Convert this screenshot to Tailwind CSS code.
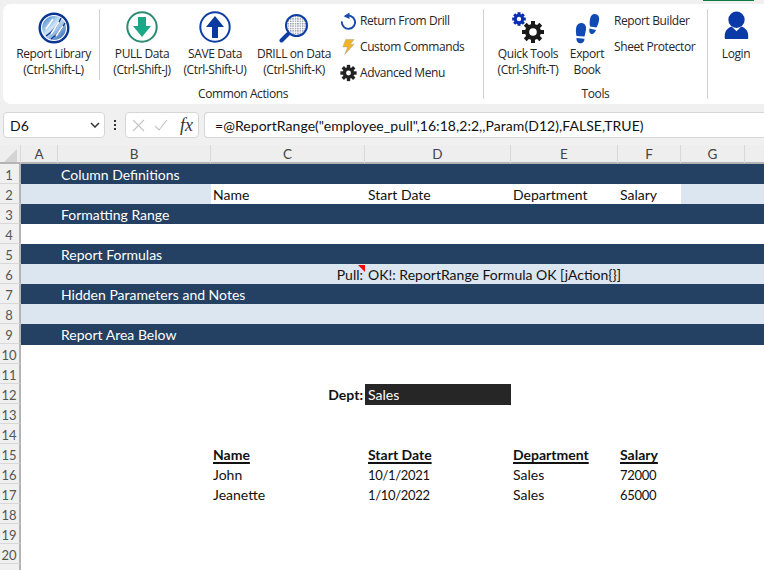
<!DOCTYPE html>
<html lang="en">
<head>
  <meta charset="UTF-8" />
  <meta name="viewport" content="width=device-width, initial-scale=1.0" />
  <title>Report Sheet</title>
  <script src="https://cdn.jsdelivr.net/npm/@tailwindcss/browser@4"></script>
</head>
<body class="bg-[#f0f0f0] w-[764px] h-[570px] overflow-hidden font-['Lato',sans-serif] text-[14px] text-[#111]">

  <!-- Tab underline -->
  <div class="h-[4px] flex justify-end pr-[10px]"><div class="w-[51px] h-[1px] bg-[#107c41]"></div></div>

  <!-- Ribbon -->
  <div class="ml-[3px] h-[100px] bg-white rounded-l-[8px] flex font-['Open_Sans',sans-serif] text-[12px] tracking-[-0.4px] leading-[16px] text-[#262626]">
    <!-- Common Actions -->
    <div class="w-[481px] flex flex-col border-r border-[#d0d0d0] my-[5px]">
      <div class="flex h-[77px] shrink-0">
        <div class="w-[97px] pl-[5px] flex flex-col items-center pt-[3px] mb-[6px] border-r border-[#d0d0d0]">
          <svg class="w-[32px] h-[32px]" viewBox="0 0 32 32">
            <defs><linearGradient id="g" x1="0" y1="0" x2="1" y2="1"><stop offset="0" stop-color="#1f6fc4"/><stop offset="0.45" stop-color="#cfe6f8"/><stop offset="1" stop-color="#0b4fa8"/></linearGradient></defs>
            <circle cx="16" cy="16" r="15.5" fill="#0a3590"/>
            <circle cx="16" cy="16" r="12.5" fill="url(#g)" stroke="#fff" stroke-width="1.2"/>
            <path d="M8 24C14 20 20 14 23 6M13 27C19 23 24 17 27 11" fill="none" stroke="#0a3590" stroke-width="1.3"/>
            <path d="M8 17L15 7M13 22L21 10M18 24L25 14" fill="none" stroke="#fff" stroke-width="1.4"/>
          </svg>
          <div class="mt-[2px] text-center whitespace-nowrap">Report Library<br>(Ctrl-Shift-L)</div>
        </div>
        <div class="w-[80px] ml-[2px] flex flex-col items-center pt-[2px]">
          <svg class="w-[32px] h-[32px]" viewBox="0 0 32 32">
            <circle cx="16" cy="16" r="14.7" fill="#fff" stroke="#2b8a72" stroke-width="2"/>
            <path d="M12 6h8v9h5L16 26 7 15h5z" fill="#1aa886"/>
          </svg>
          <div class="mt-[3px] text-center whitespace-nowrap">PULL Data<br>(Ctrl-Shift-J)</div>
        </div>
        <div class="w-[66px] flex flex-col items-center pt-[2px]">
          <svg class="w-[32px] h-[32px]" viewBox="0 0 32 32">
            <circle cx="16" cy="16" r="14.7" fill="#fff" stroke="#0e3ea3" stroke-width="2"/>
            <path d="M13 27V16H7L16 5l9 11h-6v11z" fill="#0a3aa0"/>
          </svg>
          <div class="mt-[3px] text-center whitespace-nowrap">SAVE Data<br>(Ctrl-Shift-U)</div>
        </div>
        <div class="w-[92px] flex flex-col items-center pt-[2px]">
          <svg class="w-[32px] h-[32px]" viewBox="0 0 32 32">
            <defs><pattern id="mesh" width="2.4" height="2.4" patternUnits="userSpaceOnUse"><rect width="2.4" height="2.4" fill="#fff"/><rect width="1.4" height="1.4" fill="#8d96a8"/></pattern></defs>
            <path d="M3.5 29.5L10 23" stroke="#0e3ea3" stroke-width="4" stroke-linecap="round"/>
            <circle cx="18.5" cy="14.5" r="10.5" fill="url(#mesh)" stroke="#0e3ea3" stroke-width="2"/>
          </svg>
          <div class="mt-[3px] text-center whitespace-nowrap">DRILL on Data<br>(Ctrl-Shift-K)</div>
        </div>
        <!-- Small commands -->
        <div class="flex flex-col gap-[10px] pt-[4px]">
          <div class="flex items-center gap-[3px] whitespace-nowrap h-[16px]">
            <svg class="w-[17px] h-[18px]" viewBox="0 0 18 18"><path d="M5.5 4.2A7 7 0 1 1 2 9.5" fill="none" stroke="#1a4ba8" stroke-width="2"/><path d="M10 0L10 7 4 4z" fill="#1a4ba8"/></svg>
            <span>Return From Drill</span>
          </div>
          <div class="flex items-center gap-[3px] whitespace-nowrap h-[16px]">
            <svg class="w-[17px] h-[18px]" viewBox="0 0 18 18"><path d="M6 1h9l-4 5h4L5 17l3-8H3z" fill="#f0b429" stroke="#a8a39a" stroke-width="0.5"/></svg>
            <span>Custom Commands</span>
          </div>
          <div class="flex items-center gap-[3px] whitespace-nowrap h-[16px]">
            <svg class="w-[17px] h-[18px]" viewBox="-9 -9 18 18" fill="#222"><g><rect x="-1.8" y="-8.6" width="3.6" height="17.2"/><rect x="-1.8" y="-8.6" width="3.6" height="17.2" transform="rotate(45)"/><rect x="-1.8" y="-8.6" width="3.6" height="17.2" transform="rotate(90)"/><rect x="-1.8" y="-8.6" width="3.6" height="17.2" transform="rotate(135)"/></g><circle r="4.6" fill="none" stroke="#222" stroke-width="3"/><circle r="2.6" fill="#fff"/></svg>
            <span>Advanced Menu</span>
          </div>
        </div>
      </div>
      <div class="h-[12px] text-center">Common Actions</div>
    </div>

    <!-- Tools -->
    <div class="w-[224px] flex flex-col border-r border-[#d0d0d0] my-[5px]">
      <div class="flex h-[77px] shrink-0">
        <div class="w-[88px] flex flex-col items-center pt-[3px]">
          <svg class="w-[32px] h-[32px]" viewBox="0 0 32 32">
            <g transform="translate(7 7)" fill="#0a2fb0"><rect x="-1.5" y="-6.8" width="3" height="13.6"/><rect x="-1.5" y="-6.8" width="3" height="13.6" transform="rotate(45)"/><rect x="-1.5" y="-6.8" width="3" height="13.6" transform="rotate(90)"/><rect x="-1.5" y="-6.8" width="3" height="13.6" transform="rotate(135)"/><circle r="4" fill="none" stroke="#0a2fb0" stroke-width="2.4"/><circle r="2.2" fill="#fff"/></g>
            <g transform="translate(21 20)" fill="#1a1a1a"><rect x="-2" y="-11" width="4" height="22"/><rect x="-2" y="-11" width="4" height="22" transform="rotate(45)"/><rect x="-2" y="-11" width="4" height="22" transform="rotate(90)"/><rect x="-2" y="-11" width="4" height="22" transform="rotate(135)"/><circle r="6" fill="none" stroke="#1a1a1a" stroke-width="4"/><circle r="3.8" fill="#fff"/></g>
          </svg>
          <div class="mt-[2px] text-center whitespace-nowrap">Quick Tools<br>(Ctrl-Shift-T)</div>
        </div>
        <div class="w-[30px] flex flex-col items-center pt-[3px]">
          <svg class="w-[32px] h-[32px] shrink-0" viewBox="0 0 32 32" fill="#0f4ab5">
            <path d="M10 11c3.500 0 5.500 2.500 5 6.500-.4 2.500-1 5-1.500 7L5.500 24C4.500 20 4 11 10 11z"/>
            <path d="M5.500 26l8 .8c0 2.800-1.600 4.500-4 4.500s-4.400-2-4-5.300z"/>
            <path d="M23.500 2c4 0 5 3 4.500 6.500-.4 2.600-1.500 5-2.500 7L19 14.500C18 9 19 2 23.500 2z"/>
            <path d="M18.500 16.500l6.500 1.500c-.8 2.500-2.500 4.200-4.600 3.900-2-.3-2.500-3-1.900-5.400z"/>
          </svg>
          <div class="mt-[2px] text-center">Export<br>Book</div>
        </div>
        <div class="flex flex-col gap-[10px] ml-[12px] pt-[4px] whitespace-nowrap">
          <div class="h-[16px]">Report Builder</div>
          <div class="h-[16px]">Sheet Protector</div>
        </div>
      </div>
      <div class="h-[12px] text-center">Tools</div>
    </div>

    <!-- Login -->
    <div class="w-[56px] flex flex-col items-center pt-[7px]">
      <svg class="w-[25px] h-[29px]" viewBox="0 0 26 30" fill="#0a3aa8">
        <circle cx="13" cy="9" r="8.5"/>
        <path d="M1 29c-1-6 1-11 7-13l5 5 5-5c6 2 8 7 7 13z"/>
      </svg>
      <div class="mt-[6px]">Login</div>
    </div>
  </div>

  <!-- Formula bar -->
  <div class="flex items-center h-[26px] mt-[8px] ml-[3px]">
    <div class="w-[102px] h-[26px] bg-white border border-[#d6d6d6] rounded-[4px] flex items-center justify-between pl-[6px] pr-[4px] text-[14px]">
      <span>D6</span>
      <svg class="w-[10px] h-[6px]" viewBox="0 0 10 6"><path d="M1 1l4 4 4-4" fill="none" stroke="#333" stroke-width="1.5"/></svg>
    </div>
    <div class="w-[20px] flex flex-col items-center gap-[2px]">
      <span class="w-[2px] h-[2px] bg-[#333]"></span><span class="w-[2px] h-[2px] bg-[#333]"></span><span class="w-[2px] h-[2px] bg-[#333]"></span>
    </div>
    <div class="w-[74px] h-[26px] bg-white border border-[#d6d6d6] rounded-[4px] flex items-center pl-[6px] gap-[9px]">
      <svg class="w-[13px] h-[13px]" viewBox="0 0 13 13"><path d="M1 1l11 11M12 1L1 12" stroke="#c4c4c4" stroke-width="1.1"/></svg>
      <svg class="w-[14px] h-[12px]" viewBox="0 0 14 12"><path d="M1 7l4 4 8-10" fill="none" stroke="#c4c4c4" stroke-width="1.1"/></svg>
      <span class="ml-[3px] font-['Liberation_Serif',serif] italic text-[18px] text-[#333] leading-none">fx</span>
    </div>
    <div class="ml-[5px] flex-1 h-[26px] bg-white border-y border-l border-[#d6d6d6] rounded-l-[4px] pl-[10px] leading-[25px] tracking-[0.05px] whitespace-nowrap">=@ReportRange("employee_pull",16:18,2:2,,Param(D12),FALSE,TRUE)</div>
  </div>

  <!-- Column headers -->
  <div class="grid grid-cols-[21px_37px_153px_154px_146px_107px_63px_64px_19px] h-[19px] mt-[7px] bg-[#eeeeee] border-b-2 border-[#b4b4b4] text-[#444] text-[13.5px] leading-[18px] text-center">
    <div class="border-r border-[#d8d8d8] flex items-end justify-end pr-[3px] pb-[1px]"><svg class="w-[13px] h-[13px]" viewBox="0 0 13 13"><path d="M13 0v13H0z" fill="#d4d4d4"/></svg></div>
    <div class="border-r border-[#d8d8d8]">A</div>
    <div class="border-r border-[#d8d8d8]">B</div>
    <div class="border-r border-[#d8d8d8]">C</div>
    <div class="border-r border-[#d8d8d8]">D</div>
    <div class="border-r border-[#d8d8d8]">E</div>
    <div class="border-r border-[#d8d8d8]">F</div>
    <div class="border-r border-[#d8d8d8]">G</div>
    <div></div>
  </div>

  <!-- Sheet rows -->
  <div class="grid grid-cols-[21px_37px_153px_154px_146px_107px_63px_64px_19px] auto-rows-[20px] leading-[21px] bg-white">
    <!-- 1 -->
    <div class="bg-[#f0f0f0] border-r-2 border-b border-r-[#b4b4b4] border-b-[#d8d8d8] text-[#555] text-[13px] leading-[22px] pr-[1px] text-center">1</div>
    <div class="col-span-8 bg-[#244062] text-white pl-[40px]">Column Definitions</div>
    <!-- 2 -->
    <div class="bg-[#f0f0f0] border-r-2 border-b border-r-[#b4b4b4] border-b-[#d8d8d8] text-[#555] text-[13px] leading-[22px] pr-[1px] text-center">2</div>
    <div class="col-span-2 bg-[#dce6f1]"></div>
    <div class="pl-[2px]">Name</div>
    <div class="pl-[3px]">Start Date</div>
    <div class="pl-[2px]">Department</div>
    <div class="pl-[2px]">Salary</div>
    <div class="col-span-2 bg-[#dce6f1]"></div>
    <!-- 3 -->
    <div class="bg-[#f0f0f0] border-r-2 border-b border-r-[#b4b4b4] border-b-[#d8d8d8] text-[#555] text-[13px] leading-[22px] pr-[1px] text-center">3</div>
    <div class="col-span-8 bg-[#244062] text-white pl-[40px]">Formatting Range</div>
    <!-- 4 -->
    <div class="bg-[#f0f0f0] border-r-2 border-b border-r-[#b4b4b4] border-b-[#d8d8d8] text-[#555] text-[13px] leading-[22px] pr-[1px] text-center">4</div>
    <div class="col-span-8"></div>
    <!-- 5 -->
    <div class="bg-[#f0f0f0] border-r-2 border-b border-r-[#b4b4b4] border-b-[#d8d8d8] text-[#555] text-[13px] leading-[22px] pr-[1px] text-center">5</div>
    <div class="col-span-8 bg-[#244062] text-white pl-[40px]">Report Formulas</div>
    <!-- 6 -->
    <div class="bg-[#f0f0f0] border-r-2 border-b border-r-[#b4b4b4] border-b-[#d8d8d8] text-[#555] text-[13px] leading-[22px] pr-[1px] text-center">6</div>
    <div class="col-span-2 bg-[#dce6f1]"></div>
    <div class="relative bg-[#dce6f1] text-right pr-[2px]">Pull:<span class="absolute top-[1px] right-0 w-0 h-0 border-t-[7px] border-l-[7px] border-t-[#ff0000] border-l-transparent"></span></div>
    <div class="col-span-5 bg-[#dce6f1] pl-[3px]">OK!: ReportRange Formula OK [jAction{}]</div>
    <!-- 7 -->
    <div class="bg-[#f0f0f0] border-r-2 border-b border-r-[#b4b4b4] border-b-[#d8d8d8] text-[#555] text-[13px] leading-[22px] pr-[1px] text-center">7</div>
    <div class="col-span-8 bg-[#244062] text-white pl-[40px]">Hidden Parameters and Notes</div>
    <!-- 8 -->
    <div class="bg-[#f0f0f0] border-r-2 border-b border-r-[#b4b4b4] border-b-[#d8d8d8] text-[#555] text-[13px] leading-[22px] pr-[1px] text-center">8</div>
    <div class="col-span-8 bg-[#dce6f1]"></div>
    <!-- 9 -->
    <div class="bg-[#f0f0f0] border-r-2 border-b border-r-[#b4b4b4] border-b-[#d8d8d8] text-[#555] text-[13px] leading-[22px] pr-[1px] text-center">9</div>
    <div class="col-span-8 bg-[#244062] shadow-[0_1px_0_#244062] text-white pl-[40px]">Report Area Below</div>
    <!-- 10, 11 -->
    <div class="bg-[#f0f0f0] border-r-2 border-b border-r-[#b4b4b4] border-b-[#d8d8d8] text-[#555] text-[13px] leading-[22px] pr-[1px] text-center">10</div><div class="col-span-8"></div>
    <div class="bg-[#f0f0f0] border-r-2 border-b border-r-[#b4b4b4] border-b-[#d8d8d8] text-[#555] text-[13px] leading-[22px] pr-[1px] text-center">11</div><div class="col-span-8"></div>
    <!-- 12 -->
    <div class="bg-[#f0f0f0] border-r-2 border-b border-r-[#b4b4b4] border-b-[#d8d8d8] text-[#555] text-[13px] leading-[22px] pr-[1px] text-center">12</div>
    <div class="col-span-3 text-right pr-[2px] font-bold">Dept:</div>
    <div class="bg-[#262626] shadow-[0_1px_0_#262626] text-white pl-[3px]">Sales</div>
    <div class="col-span-4"></div>
    <!-- 13, 14 -->
    <div class="bg-[#f0f0f0] border-r-2 border-b border-r-[#b4b4b4] border-b-[#d8d8d8] text-[#555] text-[13px] leading-[22px] pr-[1px] text-center">13</div><div class="col-span-8"></div>
    <div class="bg-[#f0f0f0] border-r-2 border-b border-r-[#b4b4b4] border-b-[#d8d8d8] text-[#555] text-[13px] leading-[22px] pr-[1px] text-center">14</div><div class="col-span-8"></div>
    <!-- 15 -->
    <div class="bg-[#f0f0f0] border-r-2 border-b border-r-[#b4b4b4] border-b-[#d8d8d8] text-[#555] text-[13px] leading-[22px] pr-[1px] text-center">15</div>
    <div class="col-span-2"></div>
    <div class="pl-[2px] font-bold underline decoration-[1.5px] underline-offset-[2px]">Name</div>
    <div class="pl-[3px] font-bold underline decoration-[1.5px] underline-offset-[2px]">Start Date</div>
    <div class="pl-[2px] font-bold underline decoration-[1.5px] underline-offset-[2px]">Department</div>
    <div class="pl-[2px] font-bold underline decoration-[1.5px] underline-offset-[2px]">Salary</div>
    <div class="col-span-2"></div>
    <!-- 16 -->
    <div class="bg-[#f0f0f0] border-r-2 border-b border-r-[#b4b4b4] border-b-[#d8d8d8] text-[#555] text-[13px] leading-[22px] pr-[1px] text-center">16</div>
    <div class="col-span-2"></div>
    <div class="pl-[2px]">John</div>
    <div class="pl-[3px] text-[13px] leading-[22px] tracking-[-0.3px]">10/1/2021</div>
    <div class="pl-[2px]">Sales</div>
    <div class="pl-[2px] text-[13px] leading-[22px] tracking-[-0.3px]">72000</div>
    <div class="col-span-2"></div>
    <!-- 17 -->
    <div class="bg-[#f0f0f0] border-r-2 border-b border-r-[#b4b4b4] border-b-[#d8d8d8] text-[#555] text-[13px] leading-[22px] pr-[1px] text-center">17</div>
    <div class="col-span-2"></div>
    <div class="pl-[2px]">Jeanette</div>
    <div class="pl-[3px] text-[13px] leading-[22px] tracking-[-0.3px]">1/10/2022</div>
    <div class="pl-[2px]">Sales</div>
    <div class="pl-[2px] text-[13px] leading-[22px] tracking-[-0.3px]">65000</div>
    <div class="col-span-2"></div>
    <!-- 18-21 -->
    <div class="bg-[#f0f0f0] border-r-2 border-b border-r-[#b4b4b4] border-b-[#d8d8d8] text-[#555] text-[13px] leading-[22px] pr-[1px] text-center">18</div><div class="col-span-8"></div>
    <div class="bg-[#f0f0f0] border-r-2 border-b border-r-[#b4b4b4] border-b-[#d8d8d8] text-[#555] text-[13px] leading-[22px] pr-[1px] text-center">19</div><div class="col-span-8"></div>
    <div class="bg-[#f0f0f0] border-r-2 border-b border-r-[#b4b4b4] border-b-[#d8d8d8] text-[#555] text-[13px] leading-[22px] pr-[1px] text-center">20</div><div class="col-span-8"></div>
    <div class="bg-[#f0f0f0] border-r-2 border-r-[#b4b4b4]"></div><div class="col-span-8"></div>
  </div>
</body>
</html>
